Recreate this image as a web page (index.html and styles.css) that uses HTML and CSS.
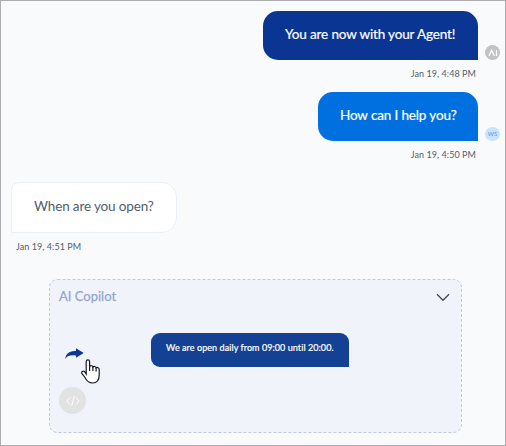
FILE: index.html
```html
<!DOCTYPE html>
<html lang="en">
<head>
<meta charset="utf-8">
<title>Chat</title>
<link rel="stylesheet" href="styles.css">
</head>
<body>
<main class="chat">
  <section class="message outgoing">
    <div class="row">
      <div class="bubble agent"><span>You are now with your Agent!</span></div>
      <div class="avatar ai"><svg width="10" height="8" viewBox="0 0 10 8"><path d="M1 7 3.7 1.2 6.4 7M8.5 1v6" fill="none" stroke="#fff" stroke-width="1.2"/></svg></div>
    </div>
    <time>Jan 19, 4:48 PM</time>
  </section>
  <section class="message outgoing second">
    <div class="row">
      <div class="bubble help"><span>How can I help you?</span></div>
      <div class="avatar ws">WS</div>
    </div>
    <time>Jan 19, 4:50 PM</time>
  </section>
  <section class="message incoming">
    <div class="bubble question"><span>When are you open?</span></div>
    <time>Jan 19, 4:51 PM</time>
  </section>
  <section class="copilot">
    <svg class="frame" width="413" height="154" viewBox="0 0 413 154"><rect x=".5" y=".5" width="412" height="153" rx="8" fill="#f0f3f9" stroke="#bdcae0" stroke-dasharray="3 2"/></svg>
    <header>
      <h2>AI Copilot</h2>
      <svg width="14" height="9" viewBox="0 0 14 9"><path d="m1 1.3 6 6 6-6" fill="none" stroke="#3f4856" stroke-width="1.3"/></svg>
    </header>
    <div class="suggestion">
      <svg class="send" width="19" height="12" viewBox="0 0 19 12"><path d="M.3 11C.6 5.500 4.500 3 11 3V.3L18.700 5 11 9.800V7.500C5.500 6.900 2 7.800.3 11Z" fill="#0c3795"/></svg>
      <div class="answer"><span>We are open daily from 09:00 until 20:00.</span></div>
    </div>
    <div class="code"><svg width="14" height="12" viewBox="0 0 14 12"><path d="M4 2.500.8 6 4 9.500M10 2.500 13.200 6 10 9.500M8.300 1.300 5.700 10.700" fill="none" stroke="#fff" stroke-width="1"/></svg></div>
    <svg class="pointer" width="19" height="25" viewBox="0 0 19 25"><path d="M5.200 15V2.700C5.200.3 8.600.3 8.600 2.700V7.500C9.500 6.300 11.700 6.500 11.900 8 13 7 14.900 7.300 15.100 8.800 16.400 8 18.200 8.700 18.200 10.500V16C18.200 21 15.800 24 11.500 24 7 24 5.500 21.500 4 18.500L1 14.700C-.2 12.700 2.300 11.300 3.600 12.700Z" fill="#fff" stroke="#17172b" stroke-width="1.200"/><path d="M8.600 7.500V12M11.900 8V12M15.100 9V12.500" stroke="#17172b" stroke-width="1.200"/></svg>
  </section>
</main>
</body>
</html>
```

FILE: styles.css
```css
* { box-sizing: border-box; }
body { margin: 0; font-family: Lato, "Liberation Sans", sans-serif; }
svg { display: block; flex: none; }
span, time, h2 { white-space: nowrap; }
.chat {
  width: 506px;
  height: 446px;
  overflow: hidden;
  padding: 10px 5px 0 10px;
  border: 1px solid #acadb0;
  background: #f9fafc;
}
.message { display: flex; flex-direction: column; }
.outgoing { height: 81px; }
.second { height: 90px; }
.row { display: flex; justify-content: flex-end; gap: 7px; }
.bubble {
  display: flex;
  align-items: center;
  height: 49px;
  padding: 0 21px 4px 22px;
  border-radius: 15px 15px 0 15px;
  color: #fff;
  font-size: 13.5px;
  font-weight: 400;
  letter-spacing: -.14px;
  line-height: 18px;
}
.agent { width: 215px; background: #0b3592; -webkit-text-stroke: .2px #fff; }
.help { width: 160px; background: #0070e0; -webkit-text-stroke: .2px #fff; }
.avatar {
  display: flex;
  align-items: center;
  justify-content: center;
  width: 15px;
  height: 15px;
  margin-top: 34px;
  border-radius: 50%;
  font-size: 6px;
}
.ai { background: #c3c3c3; }
.ws { height: 14px; margin-top: 35px; background: #c7e3ff; color: #5799d9; padding-bottom: 2px; }
time { color: #525d6c; font-size: 9px; line-height: 12px; letter-spacing: .07px; }
.outgoing time { margin: 8px 24px 0 0; text-align: right; }
.question {
  width: 166px;
  height: 51px;
  padding: 0 0 3px 22px;
  border: 1px solid #e8eff6;
  border-radius: 8px 15px 15px 0;
  background: #fff;
  color: #525d6c;
}
.incoming { height: 97px; }
.incoming time { margin: 8px 0 0 5px; }
.copilot { position: relative; z-index: 0; width: 413px; height: 154px; margin-left: 38px; padding: 8px 12px 0 10px; }
.frame { position: absolute; inset: 0; z-index: -1; }
header { display: flex; justify-content: space-between; align-items: center; height: 20px; }
h2 { margin: -2px 0 0; color: #94a6ce; font-size: 13px; font-weight: 400; line-height: 20px; -webkit-text-stroke: .25px #94a6ce; }
.suggestion { display: flex; align-items: flex-start; margin-top: 26px; }
.send { margin: 15px 0 0 6px; }
.answer {
  display: flex;
  align-items: center;
  width: 198px;
  height: 34px;
  margin-left: 67px;
  padding: 0 15px 5px;
  border-radius: 9px 9px 0 9px;
  background: #144194;
  color: #fff;
  font-size: 9px;
  letter-spacing: .07px;
  -webkit-text-stroke: .2px #fff;
}
.code { display: flex; align-items: center; justify-content: center; width: 27px; height: 27px; margin-top: 20px; border-radius: 50%; background: #e2e2e2; }
.pointer { position: absolute; left: 32px; top: 80px; }
```
